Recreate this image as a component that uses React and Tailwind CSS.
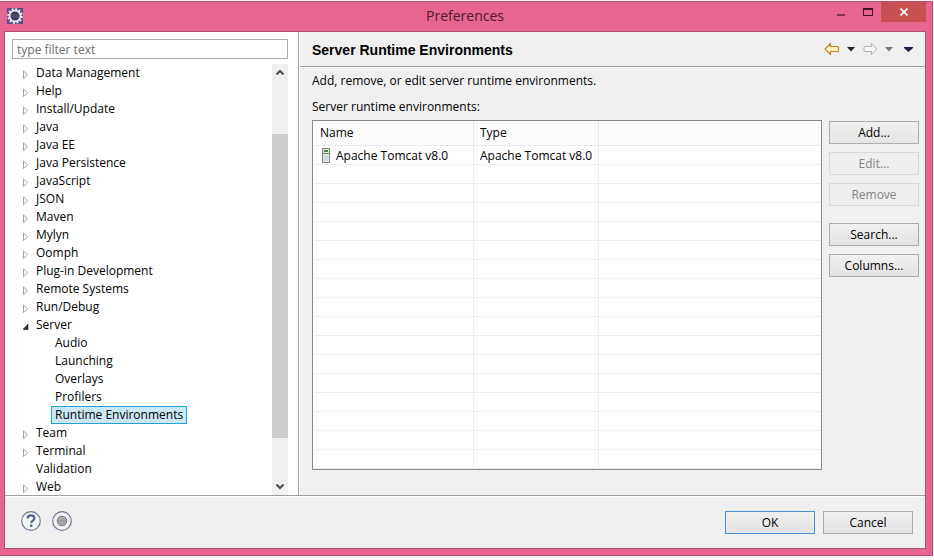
import React from "react";

const tree = [
  { label: "Data Management", state: "closed" },
  { label: "Help", state: "closed" },
  { label: "Install/Update", state: "closed" },
  { label: "Java", state: "closed" },
  { label: "Java EE", state: "closed" },
  { label: "Java Persistence", state: "closed" },
  { label: "JavaScript", state: "closed" },
  { label: "JSON", state: "closed" },
  { label: "Maven", state: "closed" },
  { label: "Mylyn", state: "closed" },
  { label: "Oomph", state: "closed" },
  { label: "Plug-in Development", state: "closed" },
  { label: "Remote Systems", state: "closed" },
  { label: "Run/Debug", state: "closed" },
  {
    label: "Server",
    state: "open",
    children: ["Audio", "Launching", "Overlays", "Profilers", "Runtime Environments"],
  },
  { label: "Team", state: "closed" },
  { label: "Terminal", state: "closed" },
  { label: "Validation", state: "leaf" },
  { label: "Web", state: "closed" },
];

const selected = "Runtime Environments";
const emptyRows = Array.from({ length: 16 }, (_, i) => i);

function EclipseIcon() {
  return (
    <svg width="16" height="16" viewBox="0 0 16 16" aria-hidden="true">
      <rect width="16" height="16" fill="#5d4a86" />
      <circle cx="8" cy="8" r="6.8" fill="none" stroke="#f1eef2" strokeWidth="2" strokeDasharray="2 1.56" />
      <circle cx="8" cy="8" r="5.4" fill="#3a3454" stroke="#f1eef2" strokeWidth="1.7" />
      <path d="M3.800 7h8.400M3.800 9h8.400" stroke="#6d6790" strokeWidth="0.8" />
    </svg>
  );
}

function TreeArrow({ state }) {
  if (state === "leaf") return <span className="w-2" />;
  return (
    <svg className="mt-1 w-2" width="8" height="10" viewBox="0 0 8 10" aria-hidden="true">
      {state === "open" ? (
        <path d="M5 2v5.500H0z" fill="#333" stroke="#222" strokeWidth="0.6" />
      ) : (
        <path d="M0.500 1v7.600L4.600 4.800z" fill="#fff" stroke="#a2a2a2" />
      )}
    </svg>
  );
}

function Caret({ color }) {
  return (
    <svg width="8" height="5" viewBox="0 0 8 5" aria-hidden="true">
      <path d="M0 0h8L4 4.500z" fill={color} />
    </svg>
  );
}

function NavArrow({ forward }) {
  return (
    <svg width="16" height="14" viewBox="0 0 16 14" aria-hidden="true">
      {forward ? (
        <path d="M15 7L9.500 1.500V4.500H3a1 1 0 0 0-1 1v3a1 1 0 0 0 1 1H9.500V12.500z" fill="#f7f7f7" stroke="#b1b1b1" strokeLinejoin="round" />
      ) : (
        <path d="M1 7L6.500 1.500V4.500H13.500a1 1 0 0 1 1 1v3a1 1 0 0 1-1 1H6.500V12.500z" fill="#fff3bd" stroke="#bd8422" strokeWidth="1.2" strokeLinejoin="round" />
      )}
    </svg>
  );
}

function ServerIcon() {
  return (
    <svg width="8" height="15" viewBox="0 0 8 15" aria-hidden="true">
      <rect x="0.5" y="0.5" width="7" height="14" fill="#e4e8e2" stroke="#82857a" />
      <rect x="2" y="2" width="4" height="2" fill="#3c8a3c" />
      <path d="M1 5.500h6" stroke="#7c8177" />
      <rect x="2" y="7" width="4" height="6" fill="#c9dbef" />
    </svg>
  );
}

function Chevron({ up }) {
  return (
    <svg width="10" height="7" viewBox="0 0 10 7" aria-hidden="true">
      <path d={up ? "M1.500 5.500L5 2l3.500 3.500" : "M1.500 1.500L5 5l3.500-3.500"} fill="none" stroke="#505050" strokeWidth="2" />
    </svg>
  );
}

function PushButton({ children, primary, disabled }) {
  const tone = disabled
    ? "border-[#d9d9d9] bg-[#efefef] text-[#838383]"
    : primary
      ? "border-[#4a90d9] bg-linear-to-b from-[#f0f0f0] to-[#e4e4e4] text-black"
      : "border-[#acacac] bg-linear-to-b from-[#f0f0f0] to-[#e4e4e4] text-black";
  return (
    <button type="button" disabled={disabled} className={`flex h-[23px] w-[90px] items-center justify-center border ${tone}`}>
      {children}
    </button>
  );
}

function TitleBar() {
  return (
    <header className="grid h-[29px] shrink-0 grid-cols-[1fr_auto_1fr] items-start">
      <div className="pt-[6px] pl-[3px]">
        <EclipseIcon />
      </div>
      <h1 className="pt-1 font-['Open_Sans',sans-serif] text-sm leading-5 text-[#4a1c2e]">Preferences</h1>
      <div className="flex justify-end">
        <button type="button" aria-label="Minimize" className="flex h-5 w-[27px] items-center justify-center">
          <svg width="8" height="8" viewBox="0 0 8 8"><path d="M0 7h8" stroke="#7b3450" strokeWidth="2" /></svg>
        </button>
        <button type="button" aria-label="Maximize" className="flex h-5 w-[27px] items-center justify-center">
          <svg width="10" height="8" viewBox="0 0 10 8"><path d="M0.500 1v6.500h9V1" fill="none" stroke="#3c1424" /><path d="M0 1h10" stroke="#3c1424" strokeWidth="2" /></svg>
        </button>
        <button type="button" aria-label="Close" className="flex h-5 w-[45px] items-center justify-center bg-[#c75050]">
          <svg width="8" height="8" viewBox="0 0 8 8"><path d="M0.500 0.500l7 7M7.500 0.500l-7 7" stroke="#fff" strokeWidth="1.7" /></svg>
        </button>
      </div>
    </header>
  );
}

function Sidebar() {
  return (
    <aside className="flex w-[294px] shrink-0 flex-col border-r border-[#a0a0a0] bg-white pt-[7px] pr-[10px] pl-[7px]">
      <input
        type="text"
        aria-label="Filter preferences"
        placeholder="type filter text"
        className="h-5 w-full shrink-0 border border-[#ababab] bg-white px-1 placeholder:text-[#6d6d6d]"
      />
      <div className="mt-[5px] flex min-h-0 flex-1">
        <ul className="min-w-0 flex-1 overflow-hidden leading-[18px]">
          {tree.map((node) => (
            <li key={node.label}>
              <div className="flex h-[18px] items-center gap-[5px] pl-[11px]">
                <TreeArrow state={node.state} />
                <span>{node.label}</span>
              </div>
              {node.children && (
                <ul className="pl-[39px]">
                  {node.children.map((child) => (
                    <li key={child} className="flex h-[18px]">
                      <span
                        className={
                          child === selected
                            ? "flex items-center border border-[#26a0da] bg-[#cbe8f6] px-[3px]"
                            : "px-1"
                        }
                      >
                        {child}
                      </span>
                    </li>
                  ))}
                </ul>
              )}
            </li>
          ))}
        </ul>
        <div className="flex w-4 flex-col bg-[#f0f0f0]">
          <div className="flex h-[17px] items-center justify-center"><Chevron up /></div>
          <div className="grow-[53]" />
          <div className="grow-[304] bg-[#cdcdcd]" />
          <div className="grow-[40]" />
          <div className="flex h-[17px] items-center justify-center"><Chevron /></div>
        </div>
      </div>
    </aside>
  );
}

function RuntimeTable() {
  return (
    <div className="min-w-0 flex-1 overflow-hidden border border-[#828790] bg-white px-px">
      <table aria-label="Server runtime environments" className="w-full table-fixed border-separate border-spacing-0 text-left">
        <colgroup>
          <col className="w-[160px]" />
          <col className="w-[125px]" />
          <col />
        </colgroup>
        <thead>
          <tr className="h-[25px] bg-[#fcfcfc]">
            <th className="border-r border-b border-[#e6ebf2] p-0 pl-[6px] font-normal">Name</th>
            <th className="border-r border-b border-[#e6ebf2] p-0 pl-[6px] font-normal">Type</th>
            <th className="border-b border-[#e6ebf2] p-0" />
          </tr>
        </thead>
        <tbody>
          <tr className="h-[19px]">
            <td className="border-r border-b border-[#ececee] p-0 pl-2">
              <div className="flex items-center gap-[6px]">
                <ServerIcon />
                <span className="pt-[2px] leading-4">Apache Tomcat v8.0</span>
              </div>
            </td>
            <td className="border-r border-b border-[#ececee] p-0 pt-[2px] pl-[6px] leading-4">Apache Tomcat v8.0</td>
            <td className="border-b border-[#ececee] p-0" />
          </tr>
          {emptyRows.map((i) => (
            <tr key={i} className="h-[19px]">
              <td className="border-r border-b border-[#ececee] p-0" />
              <td className="border-r border-b border-[#ececee] p-0" />
              <td className="border-b border-[#ececee] p-0" />
            </tr>
          ))}
        </tbody>
      </table>
    </div>
  );
}

function Page() {
  return (
    <main className="flex min-w-0 flex-1 flex-col border-l border-white">
      <div className="flex h-[35px] shrink-0 items-center justify-between border-b border-[#a0a0a0] px-3">
        <h2 className="pt-[2px] font-['Liberation_Sans',Arial,sans-serif] text-sm font-bold text-black">
          Server Runtime Environments
        </h2>
        <div className="flex items-center gap-[7px]">
          <button type="button" aria-label="Back"><NavArrow /></button>
          <button type="button" aria-label="Back history"><Caret color="#222222" /></button>
          <button type="button" aria-label="Forward"><NavArrow forward /></button>
          <button type="button" aria-label="Forward history"><Caret color="#777777" /></button>
          <button type="button" aria-label="View menu" className="ml-1">
            <svg width="9" height="5" viewBox="0 0 9 5" aria-hidden="true">
              <path d="M0 0h9v1L4.500 5 0 1z" fill="#2a1a4a" />
            </svg>
          </button>
        </div>
      </div>
      <div className="flex min-h-0 flex-1 flex-col border-t border-white pt-1 pr-[6px] pb-[25px] pl-3">
        <p className="h-[18px] shrink-0 leading-[18px]">Add, remove, or edit server runtime environments.</p>
        <p className="mt-2 h-[18px] shrink-0 leading-[18px]">Server runtime environments:</p>
        <div className="mt-1 flex min-h-0 flex-1 gap-[7px]">
          <RuntimeTable />
          <div className="flex flex-col gap-2 pt-px">
            <PushButton>Add...</PushButton>
            <PushButton disabled>Edit...</PushButton>
            <PushButton disabled>Remove</PushButton>
            <div className="mt-[9px] flex flex-col gap-2">
              <PushButton>Search...</PushButton>
              <PushButton>Columns...</PushButton>
            </div>
          </div>
        </div>
      </div>
    </main>
  );
}

function Footer() {
  return (
    <footer className="flex h-[52px] shrink-0 items-start justify-between border-t border-white pt-[14px] pr-3 pl-4">
      <div className="flex gap-[11px]">
        <button type="button" aria-label="Help">
          <svg width="20" height="20" viewBox="0 0 20 20">
            <circle cx="10" cy="10" r="9.300" fill="#f3f5f9" stroke="#6a7894" strokeWidth="1.200" />
            <path d="M6.700 7.500C6.700 5.200 8 4.300 10 4.300s3.400 1.100 3.400 2.900c0 2.300-3.200 2.400-3.200 4.800" fill="none" stroke="#53658c" strokeWidth="2.300" />
            <rect x="9" y="13.500" width="2.400" height="2.400" fill="#53658c" />
          </svg>
        </button>
        <button type="button" aria-label="Record">
          <svg width="20" height="20" viewBox="0 0 20 20">
            <circle cx="10" cy="10" r="9.300" fill="#f3f3f5" stroke="#6a7894" strokeWidth="1.200" />
            <circle cx="10" cy="10" r="4.800" fill="#aaa9a7" stroke="#7c7c7c" />
            <path d="M6 10h8" stroke="#8e8e8e" />
          </svg>
        </button>
      </div>
      <div className="flex gap-2">
        <PushButton primary>OK</PushButton>
        <PushButton>Cancel</PushButton>
      </div>
    </footer>
  );
}

export default function App() {
  return (
    <div className="h-screen bg-[#fdf5f8] pt-px pr-px pb-1 font-['Open_Sans','Segoe_UI',sans-serif] text-xs text-black">
      <div className="flex h-full flex-col border-y border-r border-[#b4506f] bg-[#e6668f] pr-[6px] pb-[6px] pl-1">
        <TitleBar />
        <div className="flex min-h-0 flex-1 flex-col border border-[#b4506f] bg-[#f0f0f0]">
          <div className="flex min-h-0 flex-1 border-b border-[#a0a0a0]">
            <Sidebar />
            <Page />
          </div>
          <Footer />
        </div>
      </div>
    </div>
  );
}
